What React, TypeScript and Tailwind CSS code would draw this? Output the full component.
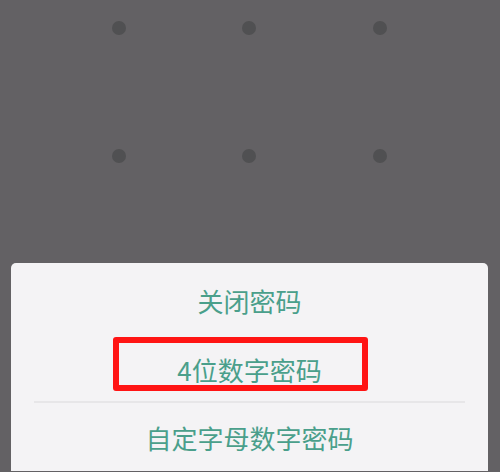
const dots = [0, 1, 2, 3, 4, 5];

export default function App() {
  return (
    <div className="relative h-[472px] w-[500px] overflow-hidden bg-[#636164] font-['Noto_Sans_CJK_SC',sans-serif]">
      {/* Lock pattern dots */}
      <div className="grid h-[263px] grid-cols-3 grid-rows-[auto_auto] content-start gap-y-[114px] pl-[112px] pr-[113px] pt-[21px]">
        {dots.map((d) => (
          <div key={d} className="flex justify-self-start [&:nth-child(3n+2)]:justify-self-center [&:nth-child(3n)]:justify-self-end">
            <span className="block h-[14px] w-[14px] rounded-full bg-[#505052]" />
          </div>
        ))}
      </div>

      {/* Bottom sheet */}
      <div className="relative ml-[11px] w-[477px] rounded-t-[5px] bg-[#f4f3f5] text-[26px] text-[#4a9f8b]">
        <div className="flex h-[74px] items-center justify-center">关闭密码</div>
        <div className="flex h-[64px] items-center justify-center">4位数字密码</div>
        <div className="mx-[23px] h-[2px] bg-[#e7e6e8]" />
        <div className="flex h-[68px] items-center justify-center">自定字母数字密码</div>

        {/* Highlight annotation */}
        <div className="absolute left-[102px] top-[74px] h-[54px] w-[255px] rounded-[3px] border-[6px] border-[#ff1414]" />
      </div>
    </div>
  );
}
